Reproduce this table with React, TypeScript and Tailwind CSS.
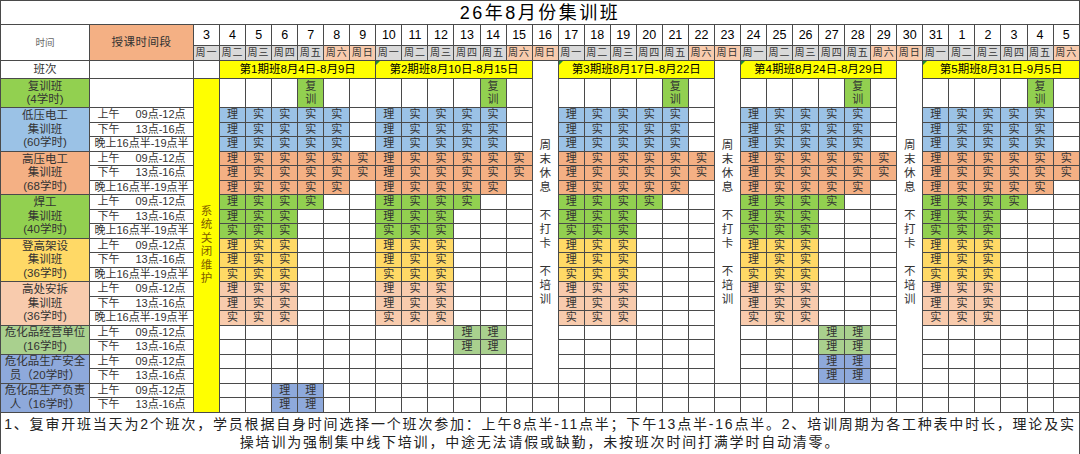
import React from "react";

const days: number[] = [];
for (let d = 3; d <= 31; d++) days.push(d);
for (let d = 1; d <= 5; d++) days.push(d);
const WK = ["周一", "周二", "周三", "周四", "周五", "周六", "周日"];
const PERIODS = [
  { s: 1, label: "第1期班8月4日-8月9日" },
  { s: 7, label: "第2期班8月10日-8月15日" },
  { s: 14, label: "第3期班8月17日-8月22日" },
  { s: 21, label: "第4期班8月24日-8月29日" },
  { s: 28, label: "第5期班8月31日-9月5日" },
];
const RESTS = [13, 20, 27];
const FRIDAYS = [4, 11, 18, 25, 32];

type Row = { t: number; pat: string; offs?: number; ps?: number[] };
type Group = { label: React.ReactNode; bg: string; rows: Row[]; last?: boolean };

const ALL = [0, 1, 2, 3, 4];
const GROUPS: Group[] = [
  {
    label: (<>低压电工<br />集训班<br />(60学时)</>),
    bg: "bg-[#9BC2E6]",
    rows: [{ t: 0, pat: "理实实实实" }, { t: 1, pat: "理实实实实" }, { t: 2, pat: "理实实实实" }],
  },
  {
    label: (<>高压电工<br />集训班<br />(68学时)</>),
    bg: "bg-[#F4B084]",
    rows: [{ t: 0, pat: "理实实实实实" }, { t: 1, pat: "理实实实实实" }, { t: 2, pat: "理实实实实" }],
  },
  {
    label: (<>焊工<br />集训班<br />(40学时)</>),
    bg: "bg-[#92D050]",
    rows: [{ t: 0, pat: "理实实实" }, { t: 1, pat: "理实实" }, { t: 2, pat: "实实实" }],
  },
  {
    label: (<>登高架设<br />集训班<br />(36学时)</>),
    bg: "bg-[#FFD966]",
    rows: [{ t: 0, pat: "理实实" }, { t: 1, pat: "理实实" }, { t: 2, pat: "实实实" }],
  },
  {
    label: (<>高处安拆<br />集训班<br />(36学时)</>),
    bg: "bg-[#F8CBAD]",
    rows: [{ t: 0, pat: "理实实" }, { t: 1, pat: "理实实" }, { t: 2, pat: "实实实" }],
  },
  {
    label: (<>危化品经营单位<br />(16学时)</>),
    bg: "bg-[#A9D08E]",
    rows: [{ t: 0, pat: "理理", offs: 3, ps: [1, 3] }, { t: 1, pat: "理理", offs: 3, ps: [1, 3] }],
  },
  {
    label: (<>危化品生产安全<br />员（20学时）</>),
    bg: "bg-[#8EA9DB]",
    rows: [{ t: 0, pat: "理理", offs: 3, ps: [3] }, { t: 1, pat: "理理", offs: 3, ps: [3] }],
  },
  {
    label: (<>危化品生产负责<br />人（16学时）</>),
    bg: "bg-[#8EA9DB]",
    rows: [{ t: 0, pat: "理理", offs: 2, ps: [0] }, { t: 1, pat: "理理", offs: 2, ps: [0] }],
    last: true,
  },
];

const B = "border border-[#4a4a4a] p-0";

function cellMap(r: Row): Record<number, string> {
  const m: Record<number, string> = {};
  const ps = r.ps ?? ALL;
  const offs = r.offs ?? 0;
  ps.forEach((p) => {
    r.pat.split("").forEach((ch, k) => {
      m[PERIODS[p].s + offs + k] = ch;
    });
  });
  return m;
}

function TimeCell({ t }: { t: number }) {
  if (t === 2)
    return <td className={`${B} text-center text-[11px] leading-none whitespace-nowrap text-[#333]`}>晚上16点半-19点半</td>;
  return (
    <td className={`${B} text-center text-[11px] leading-none whitespace-nowrap text-[#333]`}>
      <span>{t === 0 ? "上午" : "下午"}</span>
      <span className="ml-[16px]">{t === 0 ? "09点-12点" : "13点-16点"}</span>
    </td>
  );
}

export default function App() {
  const bodyRows: React.ReactNode[] = [];
  GROUPS.forEach((g, gi) => {
    g.rows.forEach((r, ri) => {
      const m = cellMap(r);
      const cells: React.ReactNode[] = [];
      for (let i = 1; i < 34; i++) {
        if (RESTS.includes(i) && !g.last) continue;
        const ch = m[i];
        cells.push(
          <td key={i} className={`${B} text-center text-[11px] leading-none text-[#333] ${ch ? g.bg : ""}`}>
            {ch ?? ""}
          </td>
        );
      }
      bodyRows.push(
        <tr key={`${gi}-${ri}`} className="h-[14.5px]">
          {ri === 0 && (
            <td rowSpan={g.rows.length} className={`${B} ${g.bg} text-center text-[11.5px] leading-[13.5px] text-[#333] whitespace-nowrap`}>
              {g.label}
            </td>
          )}
          <TimeCell t={r.t} />
          {cells}
        </tr>
      );
    });
  });

  const classRow: React.ReactNode[] = [];
  for (let i = 1; i < 34; i++) {
    const p = PERIODS.find((x) => x.s === i);
    if (p) {
      classRow.push(
        <td key={i} colSpan={6} className={`${B} bg-[#FFFF00] text-center text-[11.5px] leading-none text-black whitespace-nowrap relative`}>
          {i > 1 && (
            <span className="absolute left-0 top-0 w-0 h-0 border-t-[4px] border-t-[#1f8a3a] border-r-[4px] border-r-transparent" />
          )}
          {p.label}
        </td>
      );
      i += 5;
    } else if (RESTS.includes(i)) {
      classRow.push(
        <td key={i} rowSpan={21} className={`${B} text-center align-middle text-[11.5px] leading-[14px] text-[#333]`}>
          周<br />末<br />休<br />息<br /><br />不<br />打<br />卡<br /><br />不<br />培<br />训
        </td>
      );
    }
  }

  const refresherRow: React.ReactNode[] = [];
  for (let i = 1; i < 34; i++) {
    if (RESTS.includes(i)) continue;
    const on = FRIDAYS.includes(i);
    refresherRow.push(
      <td key={i} className={`${B} text-center text-[11px] leading-[13.5px] text-[#333] ${on ? "bg-[#92D050]" : ""}`}>
        {on ? (<>复<br />训</>) : ""}
      </td>
    );
  }

  return (
    <div className="w-[1080px] h-[454px] bg-white overflow-hidden font-['Liberation_Sans','Noto_Sans_CJK_SC',sans-serif]">
      <table className="border-collapse table-fixed w-[1080px]">
        <colgroup>
          <col className="w-[89px]" />
          <col className="w-[104px]" />
          {days.map((_, i) => (
            <col key={i} />
          ))}
        </colgroup>
        <tbody>
          <tr className="h-[24px]">
            <td colSpan={36} className={`${B} text-center text-[18px] tracking-[2.5px] leading-none text-black`}>
              26年8月份集训班
            </td>
          </tr>
          <tr className="h-[21px]">
            <td rowSpan={2} className={`${B} text-center text-[9.5px] text-[#666] leading-none`}>时间</td>
            <td rowSpan={2} className={`${B} bg-[#F4B084] text-center text-[11.5px] tracking-[0.5px] text-[#333] leading-none`}>授课时间段</td>
            {days.map((d, i) => (
              <td key={i} className={`${B} text-center text-[12.5px] leading-none text-black`}>{d}</td>
            ))}
          </tr>
          <tr className="h-[15px]">
            {days.map((_, i) => {
              const w = i % 7;
              return (
                <td key={i} className={`${B} text-center text-[10px] tracking-[1px] leading-none text-[#333] whitespace-nowrap ${w >= 5 ? "bg-[#F8CBAD]" : "bg-[#D9D9D9]"}`}>
                  {WK[w]}
                </td>
              );
            })}
          </tr>
          <tr className="h-[18px]">
            <td className={`${B} text-center text-[11.5px] leading-none text-[#333]`}>班次</td>
            <td className={B}></td>
            <td className={B}></td>
            {classRow}
          </tr>
          <tr className="h-[29px]">
            <td className={`${B} bg-[#92D050] text-center text-[11.5px] leading-[13.5px] text-[#333]`}>
              复训班<br />(4学时)
            </td>
            <td className={B}></td>
            <td rowSpan={22} className={`${B} bg-[#FFFF00] text-center align-middle text-[11.5px] leading-[13.5px] text-[#7F6000]`}>
              系<br />统<br />关<br />闭<br />维<br />护
            </td>
            {refresherRow}
          </tr>
          {bodyRows}
          <tr className="h-[42px]">
            <td colSpan={36} className={`${B} text-center text-[14px] tracking-[1.8px] leading-[18px] text-[#222] whitespace-nowrap`}>
              <div>1、复审开班当天为2个班次，学员根据自身时间选择一个班次参加：上午8点半-11点半；下午13点半-16点半。2、培训周期为各工种表中时长，理论及实</div>
              <div>操培训为强制集中线下培训，中途无法请假或缺勤，未按班次时间打满学时自动清零。</div>
            </td>
          </tr>
        </tbody>
      </table>
    </div>
  );
}
